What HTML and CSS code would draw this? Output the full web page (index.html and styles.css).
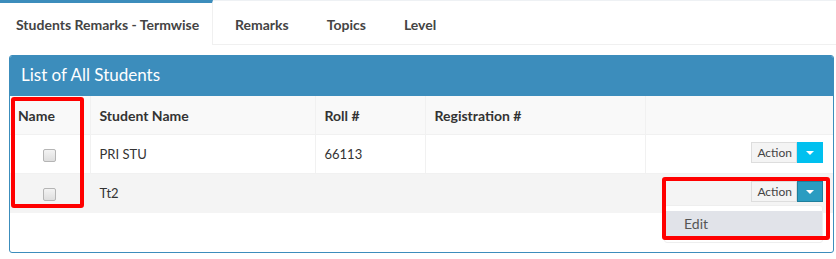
FILE: index.html
```html
<!DOCTYPE html>
<html lang="en">
<head>
  <meta charset="UTF-8" />
  <meta name="viewport" content="width=device-width, initial-scale=1.0" />
  <title>Students Remarks</title>
  <link rel="stylesheet" href="styles.css">
</head>
<body>
  <ul class="tabs">
    <li class="tab active">Students Remarks - Termwise</li>
    <li class="tab">Remarks</li>
    <li class="tab">Topics</li>
    <li class="tab">Level</li>
  </ul>

  <div class="content">
    <div class="panel">
      <div class="panel-head">List of All Students</div>
      <table class="grid">
        <colgroup>
          <col class="col-check" />
          <col class="col-name" />
          <col class="col-roll" />
          <col class="col-reg" />
          <col />
        </colgroup>
        <thead>
          <tr>
            <th>Name</th>
            <th>Student Name</th>
            <th>Roll #</th>
            <th>Registration #</th>
            <th></th>
          </tr>
        </thead>
        <tbody>
          <tr>
            <td class="cell-check"><span class="check"></span></td>
            <td>PRI STU</td>
            <td>66113</td>
            <td></td>
            <td class="cell-act">
              <div class="btn-group">
                <span class="btn-label">Action</span>
                <span class="btn-caret"><span class="caret"></span></span>
              </div>
            </td>
          </tr>
          <tr class="striped">
            <td class="cell-check"><span class="check"></span></td>
            <td>Tt2</td>
            <td></td>
            <td></td>
            <td class="cell-act">
              <div class="btn-group open">
                <span class="btn-label">Action</span>
                <span class="btn-caret"><span class="caret"></span></span>
                <ul class="menu">
                  <li class="menu-item">Edit</li>
                </ul>
              </div>
            </td>
          </tr>
        </tbody>
      </table>
      <div class="panel-foot"></div>
    </div>

    <div class="mark mark-left"></div>
    <div class="mark mark-right"></div>
  </div>
</body>
</html>
```

FILE: styles.css
```css
body {
  margin: 0;
  font-family: Lato, "Open Sans", sans-serif;
  font-size: 13px;
  color: #333;
  background: #fff;
}
.tabs {
  list-style: none;
  margin: 0;
  padding: 0;
  display: flex;
  border-top: 1px solid #eef1f4;
  border-bottom: 1px solid #f0f0f0;
  height: 43px;
  box-sizing: content-box;
}
.tab {
  padding: 14px 19px 0;
  line-height: 20px;
  font-weight: bold;
  color: #444;
  font-size: 14px;
}
.tab.active {
  width: 213px;
  box-sizing: border-box;
  padding: 12px 0 0 16px;
  margin-top: -1px;
  border-top: 3px solid #3c8dbc;
  border-right: 1px solid #f0f0f0;
  height: 45px;
  background: #fff;
}
.tabs .tab:nth-child(2) {
  padding-left: 22px;
}
.content {
  position: relative;
  padding: 10px 2px 0 9px;
}
.panel {
  border: 1px solid #3c8dbc;
  border-radius: 3px;
  overflow: hidden;
}
.panel-head {
  background: #3c8dbc;
  color: #fff;
  font-size: 17px;
  height: 40px;
  line-height: 38px;
  padding-left: 11px;
}
.grid {
  width: 100%;
  border-collapse: collapse;
  table-layout: fixed;
}
.col-check {
  width: 80px;
}
.col-name {
  width: 225px;
}
.col-roll {
  width: 110px;
}
.col-reg {
  width: 220px;
}
.grid th,
.grid td {
  border: 1px solid #f1f1f1;
  border-top: 0;
  height: 38px;
  padding: 0 9px;
  text-align: left;
  vertical-align: middle;
}
.grid tr > :first-child {
  border-left: 0;
}
.grid tr > :last-child {
  border-right: 0;
}
.grid thead tr {
  background: #f9f9f9;
}
.grid th {
  font-weight: bold;
  font-size: 14px;
  color: #333;
}
.grid th:first-child {
  padding-left: 8px;
}
.grid .striped {
  background: #f4f4f4;
}
.grid .striped td {
  border-color: #f4f4f4;
}
.grid td.cell-check {
  text-align: center;
}
.grid td.cell-act {
  text-align: right;
  padding-right: 10px;
}
.check {
  display: inline-block;
  width: 11px;
  height: 11px;
  border: 1px solid #b5b5b5;
  border-radius: 2px;
  background: linear-gradient(#f3f3f3, #dedede);
  vertical-align: middle;
}
.btn-group {
  position: relative;
  display: inline-flex;
  vertical-align: middle;
  font-size: 12px;
  margin-top: -3px;
}
.btn-label {
  height: 19px;
  line-height: 19px;
  padding: 0 4px 0 5px;
  background: #f4f4f4;
  border: 1px solid #ddd;
  color: #444;
}
.btn-caret {
  width: 26px;
  height: 21px;
  background: #00c0ef;
  display: flex;
  align-items: center;
  justify-content: center;
}
.open .btn-caret {
  background: #2a9cc1;
  box-shadow: inset 0 0 0 1px #1f7f9c;
}
.caret {
  width: 0;
  height: 0;
  border-left: 4px solid transparent;
  border-right: 4px solid transparent;
  border-top: 4px solid #fff;
}
.menu {
  position: absolute;
  top: 24px;
  right: 0;
  width: 157px;
  margin: 0;
  padding: 5px 0;
  list-style: none;
  background: #fff;
  border: 1px solid #eee;
  border-radius: 3px;
  text-align: left;
  z-index: 2;
}
.menu-item {
  background: #e1e3e9;
  padding: 0 19px;
  height: 26px;
  line-height: 26px;
  font-size: 14px;
  color: #555;
}
.panel-foot {
  height: 39px;
}
.mark {
  position: absolute;
  border: 4px solid #ff0000;
  border-radius: 3px;
  box-sizing: border-box;
  z-index: 3;
}
.mark-left {
  left: 11px;
  top: 52px;
  width: 73px;
  height: 111px;
}
.mark-right {
  left: 662px;
  top: 132px;
  width: 168px;
  height: 63px;
}
```
